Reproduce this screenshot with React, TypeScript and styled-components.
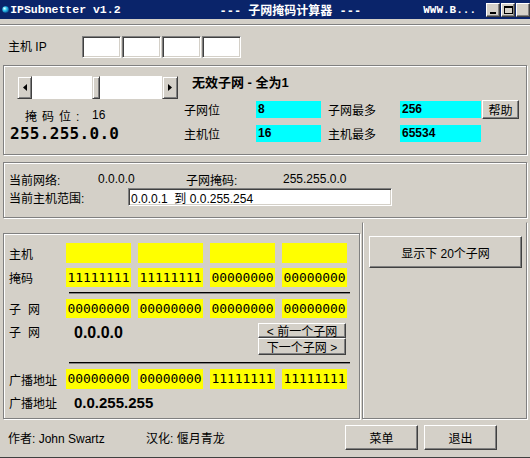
import React from "react";
import styled, { createGlobalStyle } from "styled-components";

const Global = createGlobalStyle`
  html, body {
    margin: 0;
    padding: 0;
    background: #d4d0c8;
  }
  body {
    font-family: "Liberation Sans", "Noto Sans CJK SC", sans-serif;
    font-size: 12px;
    color: #000;
  }
`;

const Window = styled.div`
  width: 530px;
  height: 458px;
  background: #d4d0c8;
  display: flex;
  flex-direction: column;
  overflow: hidden;
  box-sizing: border-box;
  border-bottom: 1px solid #404040;
`;

const TitleBar = styled.div`
  height: 19px;
  flex: none;
  background: #0a246a;
  color: #fff;
  display: flex;
  align-items: center;
  padding-left: 2px;
  white-space: nowrap;
`;

const TitleText = styled.span`
  font-family: "Liberation Mono", "Noto Sans CJK SC", monospace;
  font-weight: bold;
  font-size: 11.5px;
  margin-left: 1px;
`;

const TitleCenter = styled.span`
  font-family: "Liberation Mono", "Noto Sans CJK SC", monospace;
  font-weight: bold;
  font-size: 12px;
  margin-left: 99px;
`;

const TitleRight = styled.span`
  font-family: "Liberation Mono", monospace;
  font-weight: bold;
  font-size: 11px;
  margin-left: 62px;
`;

const CaptionButtons = styled.div`
  display: flex;
  gap: 1px;
  margin-left: 10px;
`;

const CaptionButton = styled.div`
  width: 14px;
  height: 14px;
  box-sizing: border-box;
  background: #d4d0c8;
  border-top: 1px solid #fff;
  border-left: 1px solid #fff;
  border-right: 1px solid #404040;
  border-bottom: 1px solid #404040;
  box-shadow: inset -1px -1px #808080;
  display: flex;
  align-items: center;
  justify-content: center;
  flex: none;
`;

const MinGlyph = styled.div`
  width: 6px;
  height: 2px;
  background: #000;
  margin-top: 6px;
  margin-left: -1px;
`;

const MaxGlyph = styled.div`
  width: 9px;
  height: 8px;
  box-sizing: border-box;
  border: 1px solid #000;
  border-top-width: 2px;
`;

const Etched = styled.div`
  margin-top: 5px;
  height: 0;
  border-top: 1px solid #808080;
  border-bottom: 1px solid #fff;
  flex: none;
`;

const IpRow = styled.div`
  height: 39px;
  display: flex;
  align-items: center;
  padding-left: 8px;
  flex: none;
`;

const Label = styled.span<{ $w?: number; $spacing?: number; $indent?: number }>`
  display: inline-block;
  box-sizing: border-box;
  width: ${(p) => (p.$w ? `${p.$w}px` : "auto")};
  padding-left: ${(p) => p.$indent ?? 0}px;
  letter-spacing: ${(p) => p.$spacing ?? 0}px;
  white-space: nowrap;
  flex: none;
`;

const IpBoxes = styled.div`
  display: flex;
  gap: 1px;
  margin-top: 2px;
`;

const Field = styled.div<{ $w: number; $h: number }>`
  width: ${(p) => p.$w}px;
  height: ${(p) => p.$h}px;
  box-sizing: border-box;
  background: #fff;
  border-top: 1px solid #808080;
  border-left: 1px solid #808080;
  border-right: 1px solid #fff;
  border-bottom: 1px solid #fff;
  box-shadow: inset 1px 1px #404040, inset -1px -1px #d4d0c8;
  display: flex;
  align-items: center;
  padding-left: 2px;
  white-space: nowrap;
  flex: none;
`;

const Group = styled.div<{ $h: number; $w?: number }>`
  height: ${(p) => p.$h}px;
  width: ${(p) => (p.$w ? `${p.$w}px` : "auto")};
  box-sizing: border-box;
  border: 1px solid #808080;
  box-shadow: inset 1px 1px #fff, 1px 1px #fff;
  flex: none;
`;

const Group1 = styled(Group)`
  margin: 0 3px;
  display: flex;
  padding: 10px 0 0 13px;
`;

const LeftCol = styled.div`
  width: 167px;
  display: flex;
  flex-direction: column;
`;

const ScrollBar = styled.div`
  width: 161px;
  height: 23px;
  display: flex;
  background: #fff;
`;

const RaisedBlock = styled.div<{ $w: number }>`
  width: ${(p) => p.$w}px;
  height: 100%;
  box-sizing: border-box;
  background: #d4d0c8;
  border-top: 1px solid #d4d0c8;
  border-left: 1px solid #d4d0c8;
  border-right: 1px solid #404040;
  border-bottom: 1px solid #404040;
  box-shadow: inset 1px 1px #fff, inset -1px -1px #808080;
  display: flex;
  align-items: center;
  justify-content: center;
  flex: none;
`;

const Track = styled.div<{ $w: number }>`
  width: ${(p) => p.$w}px;
  background: #fff;
  flex: none;
`;

const MaskBitsRow = styled.div`
  display: flex;
  margin-top: 9px;
  padding-left: 8px;
  height: 14px;
  align-items: center;
`;

const BigMask = styled.div`
  font-family: "DejaVu Sans Mono", monospace;
  font-weight: bold;
  font-size: 16px;
  letter-spacing: 0.3px;
  margin-left: -7px;
  margin-top: 2px;
  line-height: 20px;
`;

const RightCol = styled.div`
  display: flex;
  flex-direction: column;
`;

const Heading = styled.div`
  font-weight: bold;
  font-size: 13px;
  margin-left: 8px;
  height: 15px;
  line-height: 15px;
  margin-top: -1px;
`;

const InfoRow = styled.div<{ $top: number }>`
  display: flex;
  align-items: center;
  height: 18px;
  margin-top: ${(p) => p.$top}px;
`;

const Cyan = styled.div<{ $w: number }>`
  width: ${(p) => p.$w}px;
  height: 17px;
  background: #00ffff;
  font-weight: bold;
  line-height: 17px;
  padding-left: 2px;
  box-sizing: border-box;
  flex: none;
`;

const Button = styled.button<{ $w: number; $h: number }>`
  width: ${(p) => p.$w}px;
  height: ${(p) => p.$h}px;
  box-sizing: border-box;
  background: #d4d0c8;
  font-family: "Liberation Sans", "Noto Sans CJK SC", sans-serif;
  font-size: 12px;
  color: #000;
  padding: 0;
  border-top: 1px solid #fff;
  border-left: 1px solid #fff;
  border-right: 1px solid #404040;
  border-bottom: 1px solid #404040;
  box-shadow: inset -1px -1px #808080;
  display: flex;
  align-items: center;
  justify-content: center;
  white-space: nowrap;
  flex: none;
`;

const Group2 = styled(Group)`
  margin: 7px 3px 0;
  padding: 8px 0 0 5px;
  display: flex;
  flex-direction: column;
`;

const NetRow = styled.div`
  display: flex;
  align-items: center;
  height: 16px;
`;

const RangeRow = styled.div`
  display: flex;
  align-items: center;
  height: 20px;
`;

const Lower = styled.div`
  display: flex;
  margin: 4px 3px 0;
  gap: 2px;
  height: 197px;
  flex: none;
`;

const Group3 = styled(Group)`
  margin-top: 11px;
  padding: 9px 0 0 5px;
  display: flex;
  flex-direction: column;
`;

const Group4 = styled(Group)`
  padding: 13px 0 0 6px;
  border-top-color: transparent;
  box-shadow: inset 1px 0 #fff, 1px 1px #fff;
`;

const BitsRow = styled.div<{ $top: number }>`
  display: flex;
  align-items: center;
  margin-top: ${(p) => p.$top}px;
`;

const Bits = styled.div`
  display: flex;
  gap: 7px;
`;

const Yellow = styled.div<{ $h: number }>`
  width: 65px;
  height: ${(p) => p.$h}px;
  background: #ffff00;
  font-family: "DejaVu Sans Mono", monospace;
  font-size: 13px;
  line-height: ${(p) => p.$h}px;
  text-align: center;
  letter-spacing: -0.1px;
`;

const Rule = styled.div<{ $top: number }>`
  margin-left: 60px;
  width: 281px;
  height: 1px;
  background: #000;
  margin-top: ${(p) => p.$top}px;
  box-shadow: 0 1px #808080;
`;

const SubnetRow = styled.div`
  display: flex;
  margin-top: 5px;
  height: 33px;
`;

const BigValue = styled.div<{ $w: number; $size?: number }>`
  font-weight: bold;
  font-size: ${(p) => p.$size ?? 16}px;
  width: ${(p) => p.$w}px;
  padding-top: 1px;
  flex: none;
`;

const NavButtons = styled.div`
  display: flex;
  flex-direction: column;
`;

const Footer = styled.div`
  display: flex;
  align-items: center;
  gap: 0;
  height: 37px;
  padding-left: 8px;
  flex: none;
`;

const FooterButtons = styled.div`
  display: flex;
  gap: 6px;
`;

const BallIcon = () => (
  <svg width="11" height="11" viewBox="0 0 11 11">
    <defs>
      <radialGradient id="ball" cx="0.35" cy="0.35" r="0.7">
        <stop offset="0" stopColor="#e8ffff" />
        <stop offset="0.45" stopColor="#30c8f0" />
        <stop offset="1" stopColor="#0a5aa0" />
      </radialGradient>
    </defs>
    <circle cx="5.5" cy="5.5" r="5" fill="url(#ball)" />
  </svg>
);

const Arrow = ({ dir }: { dir: "left" | "right" }) => (
  <svg width="4" height="7" viewBox="0 0 4 7">
    <path d={dir === "left" ? "M4 0 L0 3.5 L4 7 Z" : "M0 0 L4 3.5 L0 7 Z"} fill="#000" />
  </svg>
);

const hostBits = ["", "", "", ""];
const maskBits = ["11111111", "11111111", "00000000", "00000000"];
const netBits = ["00000000", "00000000", "00000000", "00000000"];
const bcastBits = ["00000000", "00000000", "11111111", "11111111"];

export default function App() {
  return (
    <>
      <Global />
      <Window>
        <TitleBar>
          <BallIcon />
          <TitleText>IPSubnetter v1.2</TitleText>
          <TitleCenter>--- 子网掩码计算器 ---</TitleCenter>
          <TitleRight>WWW.B...</TitleRight>
          <CaptionButtons>
            <CaptionButton>
              <MinGlyph />
            </CaptionButton>
            <CaptionButton>
              <MaxGlyph />
            </CaptionButton>
            <CaptionButton />
          </CaptionButtons>
        </TitleBar>
        <Etched />
        <IpRow>
          <Label $w={74}>主机 IP</Label>
          <IpBoxes>
            {[0, 1, 2, 3].map((i) => (
              <Field key={i} $w={39} $h={22} />
            ))}
          </IpBoxes>
        </IpRow>

        <Group1 $h={90}>
          <LeftCol>
            <ScrollBar>
              <RaisedBlock $w={15}>
                <Arrow dir="left" />
              </RaisedBlock>
              <Track $w={60} />
              <RaisedBlock $w={8} />
              <Track $w={62} />
              <RaisedBlock $w={16}>
                <Arrow dir="right" />
              </RaisedBlock>
            </ScrollBar>
            <MaskBitsRow>
              <Label $w={67} $spacing={5}>掩码位:</Label>
              <Label>16</Label>
            </MaskBitsRow>
            <BigMask>255.255.0.0</BigMask>
          </LeftCol>
          <RightCol>
            <Heading>无效子网 - 全为1</Heading>
            <InfoRow $top={10}>
              <Label $w={72}>子网位</Label>
              <Cyan $w={65}>8</Cyan>
              <Label $w={79} $indent={7}>子网最多</Label>
              <Cyan $w={81}>256</Cyan>
              <Button $w={37} $h={19} style={{ marginLeft: 1 }}>
                帮助
              </Button>
            </InfoRow>
            <InfoRow $top={6}>
              <Label $w={72}>主机位</Label>
              <Cyan $w={65}>16</Cyan>
              <Label $w={79} $indent={7}>主机最多</Label>
              <Cyan $w={81}>65534</Cyan>
            </InfoRow>
          </RightCol>
        </Group1>

        <Group2 $h={56}>
          <NetRow>
            <Label $w={89}>当前网络:</Label>
            <Label $w={88}>0.0.0.0</Label>
            <Label $w={97}>子网掩码:</Label>
            <Label>255.255.0.0</Label>
          </NetRow>
          <RangeRow>
            <Label $w={119}>当前主机范围:</Label>
            <Field $w={264} $h={18}>
              0.0.0.1&nbsp;&nbsp;到 0.0.255.254
            </Field>
          </RangeRow>
        </Group2>

        <Lower>
          <Group3 $w={357} $h={186}>
            <BitsRow $top={0}>
              <Label $w={57}>主机</Label>
              <Bits>
                {hostBits.map((b, i) => (
                  <Yellow key={i} $h={20}>{b}</Yellow>
                ))}
              </Bits>
            </BitsRow>
            <BitsRow $top={5}>
              <Label $w={57}>掩码</Label>
              <Bits>
                {maskBits.map((b, i) => (
                  <Yellow key={i} $h={19}>{b}</Yellow>
                ))}
              </Bits>
            </BitsRow>
            <Rule $top={5} />
            <BitsRow $top={6}>
              <Label $w={57} $spacing={7}>子网</Label>
              <Bits>
                {netBits.map((b, i) => (
                  <Yellow key={i} $h={19}>{b}</Yellow>
                ))}
              </Bits>
            </BitsRow>
            <SubnetRow>
              <Label $w={65} $spacing={7}>子网</Label>
              <BigValue $w={184}>0.0.0.0</BigValue>
              <NavButtons>
                <Button $w={88} $h={15}>&lt; 前一个子网</Button>
                <Button $w={88} $h={17}>下一个子网 &gt;</Button>
              </NavButtons>
            </SubnetRow>
            <Rule $top={6} />
            <BitsRow $top={6}>
              <Label $w={57}>广播地址</Label>
              <Bits>
                {bcastBits.map((b, i) => (
                  <Yellow key={i} $h={20}>{b}</Yellow>
                ))}
              </Bits>
            </BitsRow>
            <BitsRow $top={4}>
              <Label $w={65}>广播地址</Label>
              <BigValue $w={150} $size={15}>0.0.255.255</BigValue>
            </BitsRow>
          </Group3>
          <Group4 $w={165} $h={197}>
            <Button $w={153} $h={32}>显示下 20个子网</Button>
          </Group4>
        </Lower>

        <Footer>
          <Label $w={138}>作者: John Swartz</Label>
          <Label $w={199}>汉化: 偃月青龙</Label>
          <FooterButtons>
            <Button $w={73} $h={25}>菜单</Button>
            <Button $w={73} $h={25}>退出</Button>
          </FooterButtons>
        </Footer>
      </Window>
    </>
  );
}
